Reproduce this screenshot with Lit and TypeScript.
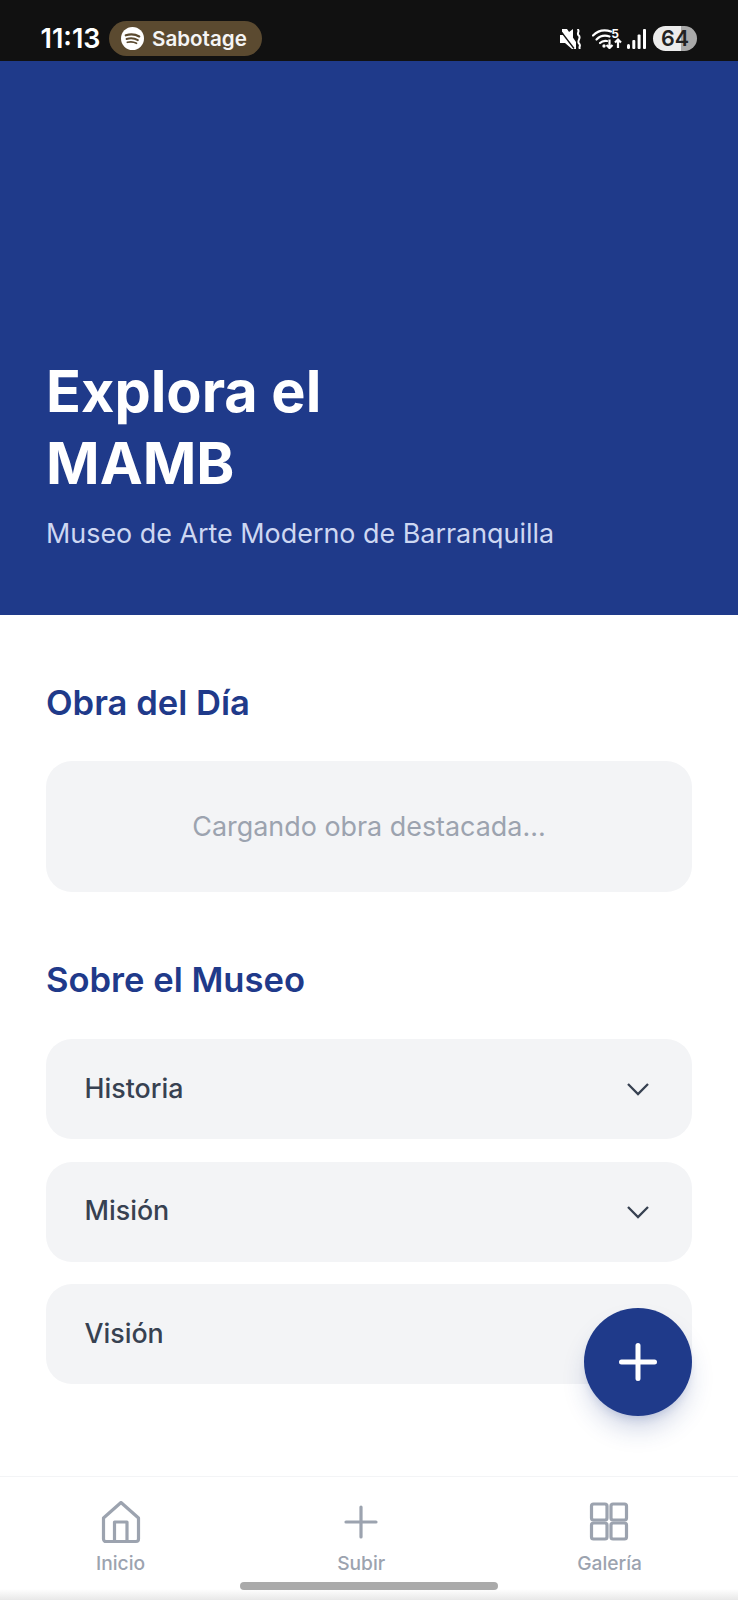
import { LitElement, html, css } from "lit";
import { customElement } from "lit/decorators.js";

@customElement("app-root")
export class AppRoot extends LitElement {
  static styles = css`
    :host { display: block; width: 738px; height: 1600px; position: relative; overflow: hidden; background: #fff; font-family: Inter, "Noto Sans", sans-serif; }
    .status { height: 61px; background: #111111; display: flex; align-items: center; padding: 16px 41px 0 40.5px; box-sizing: border-box; color: #fff; }
    .time { font-size: 27px; font-weight: 600; line-height: 30px; width: 68.5px; }
    .pill { height: 35px; width: 153px; box-sizing: border-box; border-radius: 18px; background: #5b4a30; display: flex; align-items: center; gap: 8px; padding-left: 12px; font-size: 20.6px; font-weight: 600; color: #f5f5f5; }
    .pill svg { flex: none; }
    .spacer { flex: 1; }
    .sys { display: flex; align-items: center; }
    .wifi { position: relative; width: 30px; height: 20px; margin: 0 5px 0 10px; }
    .wifi svg { display: block; }
    .wifi span { position: absolute; right: 3px; top: -1px; font-size: 12px; font-weight: 700; line-height: 12px; }
    .batt { width: 44px; height: 25px; margin-left: 7px; border-radius: 12.5px; background: linear-gradient(90deg, #ececec 0 64%, #a9a9a9 64% 100%); color: #222; font-size: 21.500px; font-weight: 600; line-height: 25px; text-align: center; }
    .hero { height: 554px; box-sizing: border-box; background: #1f3a8a; padding: 0 46px 62px; display: flex; flex-direction: column; justify-content: flex-end; color: #fff; }
    h1 { margin: 0; font-size: 57.6px; line-height: 72px; font-weight: 700; }
    .sub { margin: 14px 0 0; font-size: 26.9px; line-height: 40px; color: #cdd7f2; }
    main { padding: 63px 46px 0; }
    h2 { margin: 0 0 35px; font-size: 34.6px; line-height: 48px; font-weight: 600; color: #1f3a8a; }
    .feat { height: 131px; box-sizing: border-box; padding-bottom: 2px; border-radius: 26px; background: #f3f4f6; display: flex; align-items: center; justify-content: center; font-size: 26.9px; color: #9ca3af; margin-bottom: 63px; }
    .rows { display: flex; flex-direction: column; gap: 22.5px; margin-top: 36px; }
    .row { height: 100px; box-sizing: border-box; border-radius: 26px; background: #f3f4f6; display: flex; align-items: center; justify-content: space-between; padding: 0 42px 0 38.5px; font-size: 26.8px; font-weight: 500; color: #374151; }
    .row span { position: relative; top: -1.5px; }
    h2.tight { margin-bottom: 0; }
    .fab { position: absolute; left: 584px; top: 1308px; width: 108px; height: 108px; border: 0; padding: 0; border-radius: 50%; background: #1f3a8a; display: flex; align-items: center; justify-content: center; box-shadow: 0 16px 26px -4px rgba(30,58,138,.22), 0 6px 10px -4px rgba(30,58,138,.18); }
    nav { position: absolute; left: 0; right: 0; top: 1476px; height: 124px; box-sizing: border-box; border-top: 1.5px solid #f3f4f6; background: linear-gradient(180deg, #fff 0 112px, #e6e6e6 124px); display: flex; justify-content: space-around; padding-top: 24px; }
    .item { display: flex; flex-direction: column; align-items: center; font-size: 19.2px; font-weight: 500; line-height: 24px; color: #9ca3af; gap: 6px; }
    .item svg { display: block; }
    .home { position: absolute; left: 240px; top: 1582px; width: 258px; height: 8px; border-radius: 4px; background: #aaaaaa; }
  `;

  render() {
    const chev = html`<svg width="24" height="14" viewBox="0 0 24 14" fill="none" stroke="#374151" stroke-width="2.3"><path d="M2 2l10 10L22 2"/></svg>`;
    return html`
      <div class="status">
        <div class="time">11:13</div>
        <div class="pill">
          <svg width="23" height="23" viewBox="0 0 24 24"><circle cx="12" cy="12" r="12" fill="#fff"/><g fill="none" stroke="#5b4a30" stroke-linecap="round"><path d="M5 8.6c4.6-1.3 10-1 14 1.200" stroke-width="2.400"/><path d="M5.800 12.500c3.900-1.100 8.500-.7 11.800 1.200" stroke-width="2"/><path d="M6.600 16c3.300-.8 6.800-.5 9.600 1" stroke-width="1.700"/></g></svg>
          Sabotage
        </div>
        <div class="spacer"></div>
        <div class="sys">
          <svg width="22" height="20" viewBox="0 0 22 20"><path d="M0 6h5l8-6v20l-1 0-7-6H0z" fill="#fff"/><path d="M7 0l9 13v7h-3L2 3V0z" fill="#fff"/><path d="M1 2.500l13 17" stroke="#111" stroke-width="1.300"/><path d="M17.500 0c3 2.500-1.500 4 1.300 6.500S16.500 12 19 14.500s-.8 3 1 5.500" stroke="#fff" stroke-width="2" fill="none"/></svg>
          <div class="wifi">
            <svg width="30" height="20" viewBox="0 0 30 20" fill="none" stroke="#fff" stroke-width="2.200" stroke-linecap="round"><path d="M1 6.500C6 1.500 13 .5 19 2.500"/><path d="M4.500 10.500C8 7 13 6 17.500 7.500"/><path d="M8 14c2-2 4.500-2.500 7-2"/><circle cx="12" cy="17" r="1.700" fill="#fff" stroke="none"/><path d="M17.500 10.500V19m-3-3l3 3 3-3" stroke-linecap="butt"/><path d="M26 19v-8.500m-3 3l3-3 3 3" stroke-linecap="butt"/></svg>
            <span>5</span>
          </div>
          <svg width="19" height="20" viewBox="0 0 19 20" fill="#fff"><rect x="0" y="15" width="3" height="5" rx="1.500"/><rect x="5.300" y="11" width="3" height="9" rx="1"/><rect x="10.600" y="5.500" width="3" height="14.500" rx="1"/><rect x="16" y="0" width="3" height="20" rx="1"/></svg>
          <div class="batt">64</div>
        </div>
      </div>
      <section class="hero">
        <h1>Explora el<br />MAMB</h1>
        <p class="sub">Museo de Arte Moderno de Barranquilla</p>
      </section>
      <main>
        <h2>Obra del Día</h2>
        <div class="feat">Cargando obra destacada...</div>
        <h2 class="tight">Sobre el Museo</h2>
        <div class="rows">
          <div class="row"><span>Historia</span> ${chev}</div>
          <div class="row"><span>Misión</span> ${chev}</div>
          <div class="row"><span>Visión</span></div>
        </div>
      </main>
      <button class="fab" aria-label="Añadir"><svg width="40" height="40" viewBox="0 0 40 40" stroke="#fff" stroke-width="5" stroke-linecap="round"><path d="M20 3.500v33M3.500 20h33"/></svg></button>
      <nav>
        <div class="item">
          <svg width="42" height="44" viewBox="0 0 42 44" fill="none" stroke="#9ca3af" stroke-width="3.200" stroke-linejoin="round"><path d="M21 1.500L3.500 17v21a2.500 2.500 0 0 0 2.500 2.500h30a2.500 2.500 0 0 0 2.500-2.500V17z"/><path d="M14.500 40.500V21h12.500v19.500"/></svg>
          Inicio
        </div>
        <div class="item">
          <svg width="42" height="44" viewBox="0 0 42 44" fill="none" stroke="#9ca3af" stroke-width="3.200" stroke-linecap="round"><path d="M21 6v30M6 21h30"/></svg>
          Subir
        </div>
        <div class="item">
          <svg width="42" height="44" viewBox="0 0 42 44" fill="none" stroke="#9ca3af" stroke-width="3.200" stroke-linejoin="round"><rect x="2.500" y="3" width="15.500" height="16" rx="2"/><rect x="22" y="3" width="15.500" height="16" rx="2"/><rect x="2.500" y="22" width="15.500" height="16" rx="2"/><rect x="22" y="22" width="15.500" height="16" rx="2"/></svg>
          Galería
        </div>
      </nav>
      <div class="home"></div>
    `;
  }
}
